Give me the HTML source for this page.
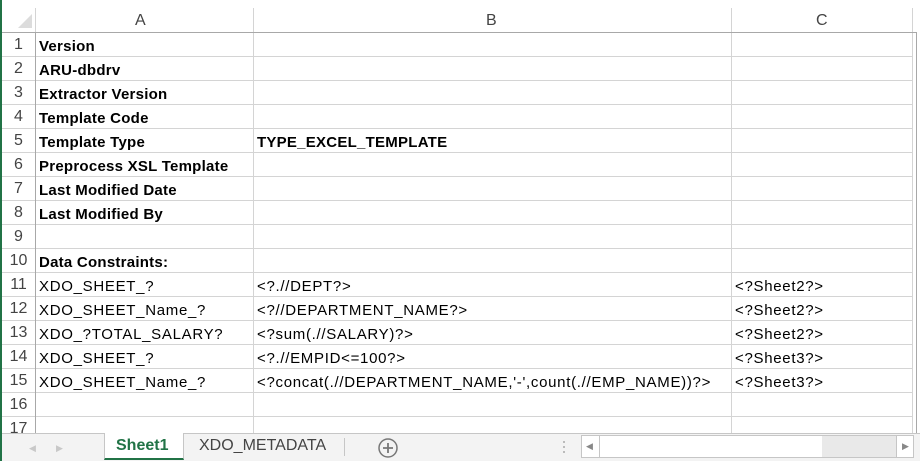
<!DOCTYPE html><html><head><style>
*{margin:0;padding:0;box-sizing:border-box}
body{width:920px;height:461px;overflow:hidden;background:#fff;font-family:"Liberation Sans",sans-serif;position:relative}
.l{position:absolute}
.c{position:absolute;font-size:15px;line-height:25px;color:#000;white-space:nowrap;letter-spacing:0.7px}
.b{font-weight:bold;letter-spacing:0.25px}
.rh{position:absolute;left:2px;width:33px;text-align:center;font-size:16px;color:#444;line-height:24px}
</style></head><body>
<div class="l" style="left:0;top:0;width:2px;height:461px;background:#217346"></div>
<svg class="l" style="left:14px;top:12px" width="20" height="18"><polygon points="18,2 18,16 4,16" fill="#dcdcdc"/></svg>
<div class="l" style="left:35px;top:8px;width:1px;height:24px;background:#d4d4d4"></div>
<div class="l" style="left:253px;top:8px;width:1px;height:24px;background:#d4d4d4"></div>
<div class="l" style="left:731px;top:8px;width:1px;height:24px;background:#d4d4d4"></div>
<div class="l" style="left:912px;top:8px;width:1px;height:24px;background:#d4d4d4"></div>
<div class="c" style="left:135px;top:8px;font-size:16px;color:#444;letter-spacing:0">A</div>
<div class="c" style="left:486px;top:8px;font-size:16px;color:#444;letter-spacing:0">B</div>
<div class="c" style="left:816px;top:8px;font-size:16px;color:#444;letter-spacing:0">C</div>
<div class="l" style="left:2px;top:32px;width:914px;height:1px;background:#a8a8a8"></div>
<div class="l" style="left:35px;top:32px;width:1px;height:401px;background:#a8a8a8"></div>
<div class="l" style="left:253px;top:33px;width:1px;height:400px;background:#d4d4d4"></div>
<div class="l" style="left:731px;top:33px;width:1px;height:400px;background:#d4d4d4"></div>
<div class="l" style="left:912px;top:33px;width:1px;height:400px;background:#d4d4d4"></div>
<div class="l" style="left:916px;top:32px;width:1px;height:401px;background:#a8a8a8"></div>
<div id="g"></div>
<script>
var rows=[["Version","",""],["ARU-dbdrv","",""],["Extractor Version","",""],["Template Code","",""],["Template Type","TYPE_EXCEL_TEMPLATE",""],["Preprocess XSL Template","",""],["Last Modified Date","",""],["Last Modified By","",""],["","",""],["Data Constraints:","",""],
["XDO_SHEET_?","<?.//DEPT?>","<?Sheet2?>"],["XDO_SHEET_Name_?","<?//DEPARTMENT_NAME?>","<?Sheet2?>"],["XDO_?TOTAL_SALARY?","<?sum(.//SALARY)?>","<?Sheet2?>"],["XDO_SHEET_?","<?.//EMPID<=100?>","<?Sheet3?>"],["XDO_SHEET_Name_?","<?concat(.//DEPARTMENT_NAME,'-',count(.//EMP_NAME))?>","<?Sheet3?>"],["","",""],["","",""]];
var h="";function e(s){return s.replace(/&/g,"&amp;").replace(/</g,"&lt;").replace(/>/g,"&gt;")}
for(var i=0;i<17;i++){var y=33+i*24;var bold=i<10?" b":"";
h+='<div class="rh" style="top:'+(y)+'px">'+(i+1)+'</div>';
h+='<div class="l" style="left:2px;top:'+(y+23)+'px;width:33px;height:1px;background:#d4d4d4"></div>';
h+='<div class="l" style="left:36px;top:'+(y+23)+'px;width:876px;height:1px;background:#d4d4d4"></div>';
var r=rows[i];
h+='<div class="c'+bold+'" style="left:39px;top:'+(y+1)+'px">'+e(r[0])+'</div>';
h+='<div class="c'+bold+'" style="left:257px;top:'+(y+1)+'px">'+e(r[1])+'</div>';
h+='<div class="c" style="left:735px;top:'+(y+1)+'px">'+e(r[2])+'</div>';}
document.getElementById("g").innerHTML=h;
</script>
<div class="l" style="left:2px;top:433px;width:918px;height:28px;background:#f3f3f3;border-top:1px solid #c6c6c6"></div>
<div class="l" style="left:29px;top:443px;font-size:9px;color:#c8c8c8">◀</div>
<div class="l" style="left:56px;top:443px;font-size:9px;color:#c8c8c8">▶</div>
<div class="l" style="left:104px;top:433px;width:80px;height:27px;background:#fff;border-bottom:2px solid #217346;border-left:1px solid #c6c6c6;border-right:1px solid #c6c6c6"></div>
<div class="c b" style="left:116px;top:434px;line-height:24px;font-size:16px;color:#217346;letter-spacing:0">Sheet1</div>
<div class="c" style="left:199px;top:434px;line-height:24px;font-size:16px;color:#444;letter-spacing:0">XDO_METADATA</div>
<div class="l" style="left:344px;top:438px;width:1px;height:18px;background:#c6c6c6"></div>
<svg class="l" style="left:377px;top:437px" width="22" height="22"><circle cx="11" cy="11" r="9" fill="none" stroke="#777" stroke-width="1.5"/><path d="M11 6V16M6 11H16" stroke="#777" stroke-width="1.8"/></svg>
<div class="l" style="left:563px;top:441px;width:2px;height:2px;background:#bbb;box-shadow:0 5px #bbb,0 10px #bbb"></div>
<div class="l" style="left:581px;top:435px;width:333px;height:23px;background:#fff;border:1px solid #c6c6c6"></div>
<div class="l" style="left:599px;top:435px;width:1px;height:23px;background:#c6c6c6"></div>
<div class="l" style="left:822px;top:436px;width:75px;height:21px;background:#e9e9e9"></div>
<div class="l" style="left:896px;top:435px;width:1px;height:23px;background:#c6c6c6"></div>
<div class="l" style="left:586px;top:441px;font-size:9px;color:#888">◀</div>
<div class="l" style="left:902px;top:441px;font-size:9px;color:#888">▶</div>
</body></html>
